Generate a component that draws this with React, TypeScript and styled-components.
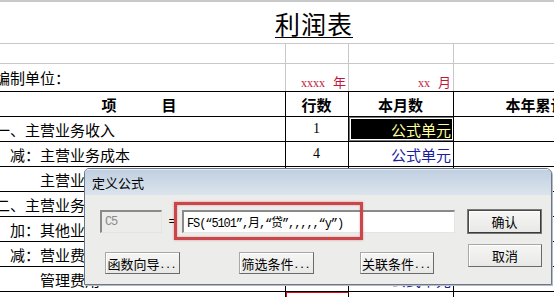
import styled, { createGlobalStyle } from "styled-components";

const GlobalStyle = createGlobalStyle`
  html, body {
    margin: 0;
    padding: 0;
    background: #ffffff;
    overflow: hidden;
  }
  * {
    box-sizing: border-box;
  }
`;

const Screen = styled.div`
  position: relative;
  width: 554px;
  height: 297px;
  overflow: hidden;
  background: #ffffff;
  font-family: "Noto Sans CJK SC", "Noto Sans", sans-serif;
  color: #000;
`;

const Sheet = styled.div`
  margin-left: -6px;
  width: 640px;
  display: flex;
  flex-direction: column;
  border-top: 2px solid #c8c8c8;
`;

const Row = styled.div<{ $h: number; $line?: string }>`
  display: grid;
  grid-template-columns: 292px 63px 105px 180px;
  height: ${({ $h }) => $h}px;
  border-bottom: 1px solid ${({ $line }) => $line || "#000"};
`;

const Cell = styled.div<{
  $align?: "left" | "center" | "right";
  $v?: "center" | "end";
  $line?: string;
  $indent?: number;
}>`
  display: flex;
  align-items: ${({ $v }) => ($v === "end" ? "flex-end" : "center")};
  justify-content: ${({ $align }) =>
    $align === "center" ? "center" : $align === "right" ? "flex-end" : "flex-start"};
  padding: 0 2px 0 ${({ $indent }) => 1 + ($indent || 0) * 15}px;
  border-right: 1px solid ${({ $line }) => $line || "#000"};
  font-size: 15px;
  line-height: 1;
  white-space: nowrap;
  overflow: hidden;
`;

const TitleCell = styled.div`
  grid-column: 1 / -1;
  display: flex;
  justify-content: center;
  align-items: center;
  padding-top: 2px;
`;

const Title = styled.span`
  font-size: 25px;
  line-height: 1;
  letter-spacing: 1px;
  text-decoration: underline;
  text-underline-offset: 3px;
  text-decoration-thickness: 1px;
`;

const HeadCell = styled(Cell)`
  font-weight: 700;
`;

const Mark = styled.span`
  color: #c4163c;
  font-size: 13px;
  padding-bottom: 2px;
  span {
    font-family: "Liberation Serif", serif;
    font-size: 12px;
    margin-right: 8px;
  }
`;

const Num = styled.span`
  font-family: "Liberation Serif", serif;
  font-size: 14px;
`;

const Selected = styled(Cell)`
  background: #000;
  color: #ffff9c;
  outline: 1px solid #fff;
  outline-offset: -2px;
  box-shadow: inset 0 0 0 1px #777;
`;

const Formula = styled(Cell)`
  color: #1c1c9c;
`;

const RedCell = styled(Cell)`
  color: #d0101c;
  border-left: 1px solid #d0101c;
  border-top: 1px solid #d0101c;
`;

const Dialog = styled.div`
  position: absolute;
  left: 84px;
  top: 168px;
  width: 468px;
  height: 117px;
  display: flex;
  flex-direction: column;
  background: #ececea;
  border: 1px solid #6c7686;
  border-radius: 5px 6px 0 0;
  box-shadow: 1px 1px 0 #b4bcc6;
  overflow: hidden;
`;

const TitleBar = styled.div`
  height: 26px;
  flex: none;
  display: flex;
  align-items: center;
  padding-left: 7px;
  font-size: 13px;
  background: linear-gradient(#c0cfe0, #d3dee9 70%, #dbe4ed);
  border-top: 1px solid #e8eef5;
`;

const Body = styled.div`
  flex: 1;
  display: flex;
  padding: 15px 10px 0 15px;
  position: relative;
`;

const LeftArea = styled.div`
  width: 355px;
  display: flex;
  flex-direction: column;
  gap: 19px;
`;

const FormulaRow = styled.div`
  display: flex;
  align-items: center;
  height: 23px;
`;

const Field = styled.div<{ $w: number; $disabled?: boolean }>`
  width: ${({ $w }) => $w}px;
  height: 23px;
  display: flex;
  align-items: center;
  padding-left: 3px;
  background: ${({ $disabled }) => ($disabled ? "#ececea" : "#ffffff")};
  color: ${({ $disabled }) => ($disabled ? "#8a8a8a" : "#000")};
  border-top: 2px solid #8a8a8a;
  border-left: 2px solid #8a8a8a;
  border-bottom: 1px solid #e4e4e4;
  border-right: 1px solid #e4e4e4;
  font-family: "Liberation Mono", "Noto Sans CJK SC", monospace;
  font-size: 12px;
  letter-spacing: -1.1px;
  white-space: nowrap;
`;

const Equals = styled.span`
  width: 20px;
  text-align: center;
  font-family: "Liberation Mono", monospace;
  font-size: 12px;
`;

const Highlight = styled.div`
  position: absolute;
  left: 89px;
  top: 7px;
  width: 189px;
  height: 38px;
  border: 3px solid #c9474b;
  box-shadow: 0 0 2px rgba(200, 60, 60, 0.5), inset 0 0 2px rgba(200, 60, 60, 0.5);
  pointer-events: none;
`;

const ButtonRow = styled.div`
  display: flex;
  height: 22px;
`;

const Button = styled.div<{ $w: number; $ml?: number; $default?: boolean }>`
  width: ${({ $w }) => $w}px;
  height: 100%;
  margin-left: ${({ $ml }) => $ml || 0}px;
  display: flex;
  align-items: center;
  justify-content: center;
  font-size: 13px;
  background: linear-gradient(#f6f6f4, #e8e8e6);
  border: 1px solid ${({ $default }) => ($default ? "#4a4a4a" : "#a8a8a8")};
  border-right-color: ${({ $default }) => ($default ? "#3a3a3a" : "#6a6a6a")};
  border-bottom-color: ${({ $default }) => ($default ? "#3a3a3a" : "#6a6a6a")};
  box-shadow: inset 1px 1px 0 #ffffff;
  ${({ $default }) => ($default ? "outline: 1px solid #7a7a7a;" : "")}
`;

const Dots = styled.span`
  font-family: "Liberation Sans", sans-serif;
  letter-spacing: 2px;
  margin-left: 1px;
`;

const RightArea = styled.div`
  margin-left: 13px;
  display: flex;
  flex-direction: column;
  gap: 11px;
  padding-top: 0;
`;

const SideButton = styled(Button)`
  height: 23px;
`;

const rows = [
  { label: "一、主营业务收入", indent: 0, no: "1", kind: "selected" },
  { label: "减：主营业务成本", indent: 1, no: "4", kind: "formula" },
  { label: "主营业务税金及附加", indent: 3, no: "5", kind: "formula" },
  { label: "二、主营业务利润", indent: 0, no: "10", kind: "formula" },
  { label: "加：其他业务利润", indent: 1, no: "11", kind: "formula" },
  { label: "减：营业费用", indent: 1, no: "14", kind: "formula" },
  { label: "管理费用", indent: 3, no: "15", kind: "formula" },
  { label: "财务费用", indent: 3, no: "宣二数据", kind: "red" },
];

export default function App() {
  return (
    <Screen>
      <GlobalStyle />
      <Sheet>
        <Row $h={42} $line="#c8c8c8">
          <TitleCell>
            <Title>利润表</Title>
          </TitleCell>
        </Row>
        <Row $h={20} $line="#c8c8c8">
          <Cell $line="#c8c8c8" />
          <Cell $line="#c8c8c8" />
          <Cell $line="#c8c8c8" />
          <Cell $line="transparent" />
        </Row>
        <Row $h={28}>
          <Cell $line="#c8c8c8">编制单位：</Cell>
          <Cell $line="#c8c8c8" $align="right" $v="end">
            <Mark>
              <span>xxxx</span>年
            </Mark>
          </Cell>
          <Cell $line="#c8c8c8" $align="right" $v="end">
            <Mark>
              <span>xx</span>月
            </Mark>
          </Cell>
          <Cell $line="transparent" />
        </Row>
        <Row $h={25}>
          <HeadCell $align="center">项　　　目</HeadCell>
          <HeadCell $align="center">行数</HeadCell>
          <HeadCell $align="center">本月数</HeadCell>
          <HeadCell $align="center" $line="transparent">
            本年累计数
          </HeadCell>
        </Row>
        {rows.map((r) => (
          <Row $h={25} key={r.label}>
            <Cell $indent={r.indent}>{r.label}</Cell>
            {r.kind === "red" ? (
              <RedCell $align="center">{r.no}</RedCell>
            ) : (
              <Cell $align="center">
                <Num>{r.no}</Num>
              </Cell>
            )}
            {r.kind === "selected" ? (
              <Selected $align="right">公式单元</Selected>
            ) : (
              <Formula $align="right">公式单元</Formula>
            )}
            <Cell $line="transparent" />
          </Row>
        ))}
      </Sheet>

      <Dialog>
        <TitleBar>定义公式</TitleBar>
        <Body>
          <LeftArea>
            <FormulaRow>
              <Field $w={62} $disabled>
                C5
              </Field>
              <Equals>=</Equals>
              <Field $w={273}>FS(“5101”,月,“贷”,,,,,“y”)</Field>
            </FormulaRow>
            <ButtonRow>
              <Button $w={75} $ml={5}>
                函数向导<Dots>...</Dots>
              </Button>
              <Button $w={75} $ml={59}>
                筛选条件<Dots>...</Dots>
              </Button>
              <Button $w={74} $ml={46}>
                关联条件<Dots>...</Dots>
              </Button>
            </ButtonRow>
          </LeftArea>
          <RightArea>
            <SideButton $w={73} $default>
              确认
            </SideButton>
            <SideButton $w={74}>取消</SideButton>
          </RightArea>
          <Highlight />
        </Body>
      </Dialog>
    </Screen>
  );
}
